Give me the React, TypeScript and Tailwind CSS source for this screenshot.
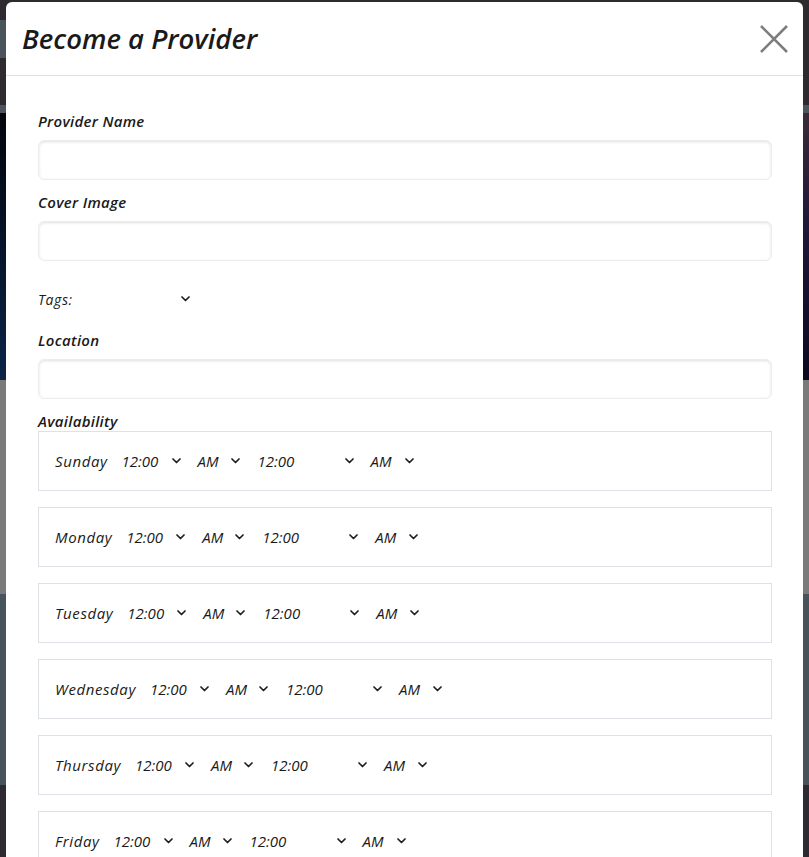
const days = ["Sunday", "Monday", "Tuesday", "Wednesday", "Thursday", "Friday", "Saturday"];

function Chevron() {
  return (
    <svg width="9" height="6" viewBox="0 0 9 6" fill="none" className="shrink-0">
      <path d="M1 1L4.5 4.5L8 1" stroke="#1f1f1f" strokeWidth="1.7" strokeLinecap="round" strokeLinejoin="round" />
    </svg>
  );
}

function DayRow({ day }: { day: string }) {
  return (
    <div className="h-[60px] border border-[#dee2e6] flex items-center px-4 mb-4 text-[15px] font-medium">
      <span className="mr-[14px] tracking-[0.6px]">{day}</span>
      <div className="w-[76px] pr-[17px] flex items-center justify-between">
        <span>12:00</span>
        <Chevron />
      </div>
      <div className="w-[60px] pr-[18px] flex items-center justify-between">
        <span>AM</span>
        <Chevron />
      </div>
      <div className="w-[113px] pr-[17px] flex items-center justify-between">
        <span>12:00</span>
        <Chevron />
      </div>
      <div className="w-[48px] pr-[5px] flex items-center justify-between">
        <span>AM</span>
        <Chevron />
      </div>
    </div>
  );
}

function Field({ label, className }: { label: string; className: string }) {
  return (
    <div className={className}>
      <div className="h-6 leading-6 text-[15px] font-semibold tracking-[0.3px] mb-[7px]">{label}</div>
      <div className="h-10 rounded-md border border-[#ededed] shadow-[inset_0_1px_3px_rgba(0,0,0,0.13)] bg-white" />
    </div>
  );
}

export default function App() {
  return (
    <div className="relative h-[857px] overflow-hidden bg-[#2f2a30]" style={{ fontFamily: "'Open Sans', 'Noto Sans', sans-serif" }}>
      {/* page behind the backdrop */}
      <div className="h-5 bg-[#2f2a30]" />
      <div className="h-[38px] flex">
        <div className="w-1/2 bg-[#4a545b]" />
        <div className="w-1/2 bg-[#2f2a30]" />
      </div>
      <div className="h-[47px] bg-[#2f2a30]" />
      <div className="h-2 bg-[#4b565c]" />
      <div className="h-[267px] flex">
        <div className="w-1/2 bg-gradient-to-b from-[#03060c] via-[#06142b] to-[#0d2446]" />
        <div className="w-1/2 bg-gradient-to-b from-[#3a2a3a] via-[#1d1535] to-[#0b0a1e]" />
      </div>
      <div className="h-[214px] bg-[#7a7a7a]" />
      <div className="h-[191px] bg-[#48545b]" />
      <div className="h-[72px] bg-[#2f2a31]" />

      {/* modal */}
      <div className="absolute top-[2px] left-[6px] w-[797px] bg-white rounded-t-md text-[#1a1a1a] italic">
        <div className="h-[74px] border-b border-[#dee2e6] flex items-center justify-between pl-4 pr-[14px]">
          <h1 className="text-[27.5px] font-semibold">Become a Provider</h1>
          <svg width="30" height="30" viewBox="0 0 30 30" fill="none">
            <path d="M2 2L28 28M28 2L2 28" stroke="#7d7d7d" strokeWidth="2.6" />
          </svg>
        </div>
        <div className="pt-[33px] pl-8 pr-[31px]">
          <Field label="Provider Name" className="" />
          <Field label="Cover Image" className="mt-[10px]" />
          <div className="mt-[26px] h-6 flex items-center text-[14px] font-medium w-[152px] justify-between">
            <span className="tracking-[0.6px]">Tags:</span>
            <Chevron />
          </div>
          <Field label="Location" className="mt-[17px]" />
          <div className="mt-[10px] h-6 leading-6 text-[15px] font-semibold tracking-[0.3px] mb-[-2px]">Availability</div>
          {days.map((d) => (
            <DayRow key={d} day={d} />
          ))}
        </div>
      </div>
    </div>
  );
}
